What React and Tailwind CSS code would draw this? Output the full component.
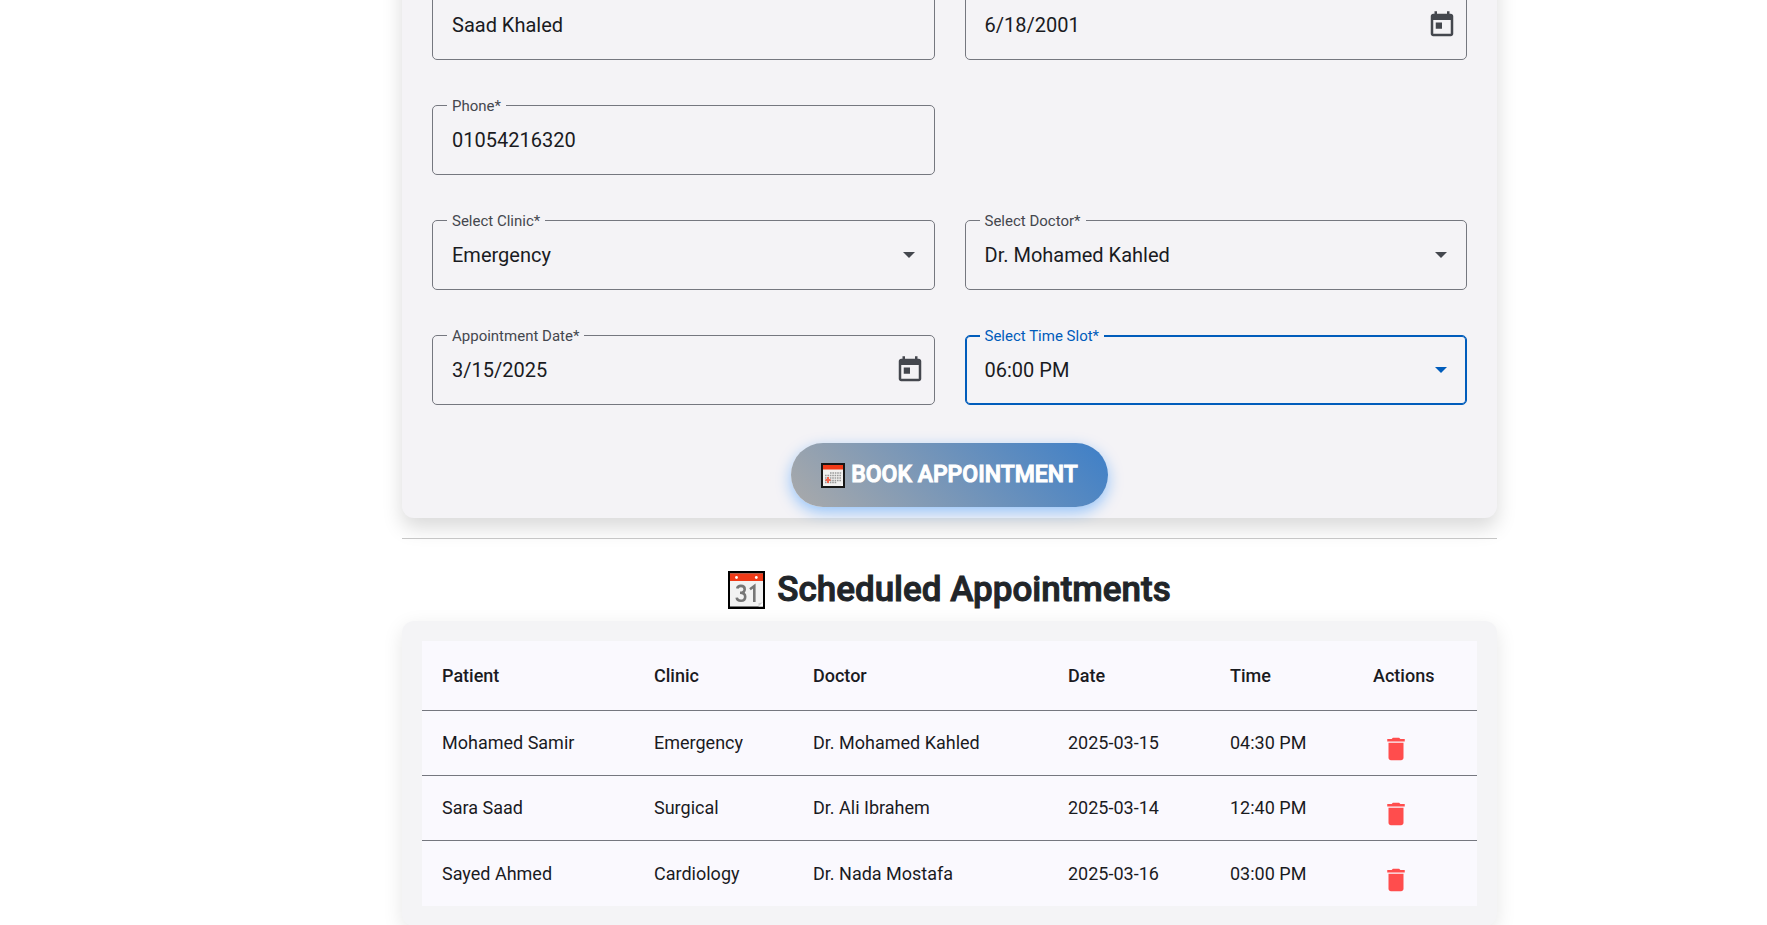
import React from "react";

const appointments = [
  { patient: "Mohamed Samir", clinic: "Emergency", doctor: "Dr. Mohamed Kahled", date: "2025-03-15", time: "04:30 PM" },
  { patient: "Sara Saad", clinic: "Surgical", doctor: "Dr. Ali Ibrahem", date: "2025-03-14", time: "12:40 PM" },
  { patient: "Sayed Ahmed", clinic: "Cardiology", doctor: "Dr. Nada Mostafa", date: "2025-03-16", time: "03:00 PM" },
];

const controlClass =
  "h-full w-full min-w-0 appearance-none bg-transparent text-xl text-[#1a1b1f] outline-none";

const cellClass = "border-b border-[#75777f] py-0 pr-0 pl-5 group-last:border-b-0";

function Field({ id, label, active = false, children }) {
  return (
    <div
      className={
        active
          ? "relative flex h-[70px] items-center rounded-[5px] border border-[#005cbb] pl-[19px] text-[#005cbb] inset-shadow-[0_0_0_1px_#005cbb]"
          : "relative flex h-[70px] items-center rounded-[5px] border border-[#75777f] pl-[19px] text-[#44474e]"
      }
    >
      {label && (
        <label
          htmlFor={id}
          className="absolute top-0 left-3.5 -translate-y-1/2 bg-[#f4f3f6] px-[5px] text-[15px] leading-5"
        >
          {label}
        </label>
      )}
      {children}
    </div>
  );
}

function DateField({ id, label, name, value }) {
  return (
    <Field id={id} label={label}>
      <input id={id} type="text" aria-label={name} defaultValue={value} className={controlClass} />
      <button type="button" aria-label="Open calendar" className="shrink-0 px-[9px]">
        <svg viewBox="0 0 24 24" className="size-[30px] fill-[#44474e]" aria-hidden="true">
          <path d="M19 3h-1V1h-2v2H8V1H6v2H5c-1.11 0-1.99.9-1.99 2L3 19c0 1.1.89 2 2 2h14c1.1 0 2-.9 2-2V5c0-1.1-.9-2-2-2zm0 16H5V8h14v11zM7 10h5v5H7z" />
        </svg>
      </button>
    </Field>
  );
}

function SelectField({ id, label, value, active }) {
  return (
    <Field id={id} label={label} active={active}>
      <select id={id} defaultValue={value} className={controlClass}>
        <option value={value}>{value}</option>
      </select>
      <svg viewBox="0 0 12 6" className="mr-[19px] h-1.5 w-3 shrink-0 fill-current" aria-hidden="true">
        <path d="M0 0h12L6 6z" />
      </svg>
    </Field>
  );
}

function MonthIcon() {
  return (
    <svg viewBox="0 0 24 25" className="h-[25px] w-6 shrink-0" aria-hidden="true">
      <rect width="24" height="25" fill="#161616" />
      <rect x="2" y="2" width="20" height="21" fill="#f1f0ef" />
      <rect x="2" y="2" width="20" height="4.5" fill="#f03a17" />
      <path d="M9 10h11.500M4 12.500h16.500M4 15h16.500M4 17.500h16.500M4 19.600h12" stroke="#9a9a9a" strokeWidth="1.500" strokeDasharray="1.600 .8" />
      <path d="M7 14v6M4.500 17h5" stroke="#f2634b" strokeWidth="2" />
      <path d="M22 20.500V23h-2.500z" fill="#ffffff" />
    </svg>
  );
}

function DayIcon() {
  return (
    <svg viewBox="0 0 37 38" className="h-[38px] w-[37px] shrink-0" aria-hidden="true">
      <rect width="37" height="38" fill="#000000" />
      <rect x="2" y="2.5" width="33" height="33" fill="#f2f2f2" />
      <rect x="2" y="2.5" width="33" height="7.5" fill="#f03a17" />
      <circle cx="8.5" cy="6.5" r="1.4" fill="#ffffff" />
      <circle cx="28.3" cy="6.5" r="1.4" fill="#ffffff" />
      <g fill="none" stroke="#767676" strokeWidth="2.6">
        <path d="M9.200 17.600C9.600 15.700 11 14.900 12.900 14.900C15.300 14.900 16.700 16.200 16.700 18.200C16.700 20.600 15 21.800 12 21.800C15.400 21.800 17.200 23.200 17.200 25.700C17.200 28.200 15.500 29.800 12.900 29.800C10.600 29.800 9 28.700 8.700 26.600" />
        <path d="M22 18.200L26.300 15V31" />
      </g>
      <path d="M35 31v4.500h-4.500z" fill="#ffffff" />
      <path d="M35 31l-4.500 4.500v-3.500q3.500 0 4.500-1z" fill="#d0d0d0" />
    </svg>
  );
}

export default function App() {
  return (
    <main className="bg-white pl-[132px] font-[Roboto,sans-serif] text-[#1a1b1f]">
      <div className="mx-auto w-full max-w-[1095px]">
        <form
          onSubmit={(e) => e.preventDefault()}
          className="-mt-10 rounded-xl bg-[#f4f3f6] px-[30px] pt-[30px] pb-[11px] shadow-[0_10px_20px_rgba(0,0,0,0.15)]"
        >
          <div className="grid grid-cols-2 gap-x-[30px] gap-y-[45px]">
            <Field>
              <input type="text" aria-label="Name" defaultValue="Saad Khaled" className={controlClass} />
            </Field>
            <DateField id="birth" name="Date of birth" value="6/18/2001" />
            <Field id="phone" label="Phone*">
              <input id="phone" type="tel" defaultValue="01054216320" className={controlClass} />
            </Field>
            <div />
            <SelectField id="clinic" label="Select Clinic*" value="Emergency" />
            <SelectField id="doctor" label="Select Doctor*" value="Dr. Mohamed Kahled" />
            <DateField id="date" label="Appointment Date*" value="3/15/2025" />
            <SelectField id="slot" label="Select Time Slot*" value="06:00 PM" active />
          </div>
          <button
            type="submit"
            className="mx-auto mt-[38px] flex h-16 items-center gap-1.5 rounded-full bg-[linear-gradient(45deg,#aaaaaa,#3d7fc8)] px-[30px] text-[23px] font-medium text-white shadow-[0_5px_15px_rgba(0,123,255,0.4)] [-webkit-text-stroke:1px_white]"
          >
            <MonthIcon />
            BOOK APPOINTMENT
          </button>
        </form>

        <hr className="mt-5 border-[#c6c6c6]" />

        <h2 className="mt-7 mb-2 flex h-[46px] items-center justify-center gap-3 text-[35px] font-medium text-[#212529] [-webkit-text-stroke:1px_#212529]">
          <DayIcon />
          Scheduled Appointments
        </h2>

        <section className="rounded-xl bg-[#f4f4f6] p-5 shadow-[0_6px_20px_rgba(0,0,0,0.1)]">
          <table className="w-full border-separate border-spacing-0 bg-[#faf9fe] text-left text-lg">
            <thead>
              <tr className="h-[70px]">
                <th className="w-[212px] border-b border-[#75777f] pl-5 font-medium">Patient</th>
                <th className="w-[159px] border-b border-[#75777f] pl-5 font-medium">Clinic</th>
                <th className="w-[255px] border-b border-[#75777f] pl-5 font-medium">Doctor</th>
                <th className="w-[162px] border-b border-[#75777f] pl-5 font-medium">Date</th>
                <th className="w-[143px] border-b border-[#75777f] pl-5 font-medium">Time</th>
                <th className="w-[124px] border-b border-[#75777f] pl-5 font-medium">Actions</th>
              </tr>
            </thead>
            <tbody>
              {appointments.map((a) => (
                <tr key={a.patient} className="group h-[65px]">
                  <td className={cellClass}>{a.patient}</td>
                  <td className={cellClass}>{a.clinic}</td>
                  <td className={cellClass}>{a.doctor}</td>
                  <td className={cellClass}>{a.date}</td>
                  <td className={cellClass}>{a.time}</td>
                  <td className={cellClass}>
                    <button type="button" aria-label="Delete appointment" className="block px-2 pt-3">
                      <svg viewBox="0 0 24 24" className="size-[30px] fill-[#ff4d4d]" aria-hidden="true">
                        <path d="M6 19c0 1.1.9 2 2 2h8c1.1 0 2-.9 2-2V7H6v12zM19 4h-3.500l-1-1h-5l-1 1H5v2h14V4z" />
                      </svg>
                    </button>
                  </td>
                </tr>
              ))}
            </tbody>
          </table>
        </section>
      </div>
    </main>
  );
}
